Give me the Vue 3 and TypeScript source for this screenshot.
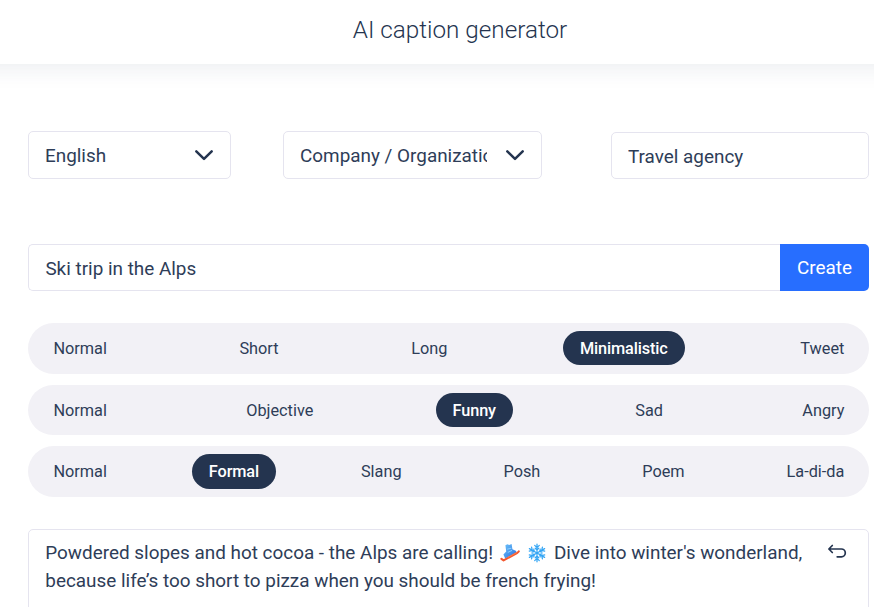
<script setup lang="ts">
import { ref } from 'vue'

interface OptionRow {
  name: string
  options: string[]
  selected: string
}

const topic = ref('Ski trip in the Alps')
const industry = ref('Travel agency')

const rows = ref<OptionRow[]>([
  { name: 'length', options: ['Normal', 'Short', 'Long', 'Minimalistic', 'Tweet'], selected: 'Minimalistic' },
  { name: 'mood', options: ['Normal', 'Objective', 'Funny', 'Sad', 'Angry'], selected: 'Funny' },
  { name: 'style', options: ['Normal', 'Formal', 'Slang', 'Posh', 'Poem', 'La-di-da'], selected: 'Formal' },
])
</script>

<template>
  <div class="page">
    <header class="header">
      <h1 class="title">AI caption generator</h1>
    </header>
    <main class="content">
      <div class="fields">
        <div class="select language">
          <span class="value">English</span>
          <svg class="chevron" width="20" height="13" viewBox="0 0 20 13"><path d="M2.3 2.3 10 9.9 17.7 2.3" /></svg>
        </div>
        <div class="select account">
          <span class="value">Company / Organization</span>
          <svg class="chevron" width="20" height="13" viewBox="0 0 20 13"><path d="M2.3 2.3 10 9.9 17.7 2.3" /></svg>
        </div>
        <input v-model="industry" class="input industry" type="text" />
      </div>

      <div class="prompt">
        <input v-model="topic" class="input topic" type="text" />
        <button class="create" type="button">Create</button>
      </div>

      <div class="rows">
        <div v-for="row in rows" :key="row.name" class="row">
          <button
            v-for="option in row.options"
            :key="option"
            type="button"
            class="pill"
            :class="{ active: row.selected === option }"
            @click="row.selected = option"
          >{{ option }}</button>
        </div>
      </div>

      <section class="result">
        <p class="caption">
          Powdered slopes and hot cocoa - the Alps are calling!
          <svg class="emoji ski" width="22" height="20" viewBox="0 0 22 20">
            <defs>
              <linearGradient id="boot" x1="0" y1="0" x2="1" y2="1">
                <stop offset="0" stop-color="#6cc4fb" />
                <stop offset="1" stop-color="#2b6fe0" />
              </linearGradient>
            </defs>
            <path d="M6.4 2.2 8.4 1.2 10.2 2 12.6 1 13.4 6.2 16.8 7.8Q17.8 8.8 17.2 10L6.2 15.4 4.4 11.4 7.2 8.6Z" fill="url(#boot)" />
            <path d="M8.2 6.2 12.4 5.2M8.8 9.4 13 7.4" fill="none" stroke="#8bd2ff" stroke-width="1" />
            <path d="M2.4 15.8 4.6 17.4 18 10Q19.4 9.2 19.8 8.4" fill="none" stroke="#f4582f" stroke-width="2.1" stroke-linecap="round" stroke-linejoin="round" />
            <path d="M9 14.4 18 9.4" stroke="#ff8952" stroke-width=".7" />
          </svg>
          <svg class="emoji snow" width="22" height="20" viewBox="0 0 22 20">
            <g fill="none" stroke="#35a6f5" stroke-width="1.25" stroke-linecap="round">
              <g v-for="angle in [0, 60, 120, 180, 240, 300]" :key="angle" :transform="`rotate(${angle} 11 10)`">
                <path d="M11 10V1.2M8.7 2.4 11 4.6 13.3 2.4M9.2 5.2 11 6.9 12.8 5.2" />
              </g>
            </g>
          </svg>
          Dive into winter's wonderland, because life’s too short to pizza when you should be french frying!
        </p>
        <button class="undo" type="button" aria-label="Undo">
          <svg width="20" height="16" viewBox="0 0 20 16"><path d="M5.3 1.5 1.9 5 5.3 8.5M2 5H14.4A3.9 3.9 0 0 1 14.4 12.8H10.2" /></svg>
        </button>
      </section>
    </main>
  </div>
</template>

<style>
body {
  background: #fff;
  overflow: hidden;
}
</style>

<style scoped>
.page {
  height: 607px;
  overflow: hidden;
  font-family: Roboto, sans-serif;
  font-size: 18.9px;
  color: #2e3d58;
}
.page * {
  box-sizing: border-box;
}
.header {
  height: 64px;
  margin: 0 -30px;
  padding-left: 46px;
  text-align: center;
  box-shadow: 0 4px 24px rgba(36, 52, 89, 0.09);
}
.title {
  margin: 0;
  font-size: 24.25px;
  font-weight: 300;
  line-height: 60px;
  color: #24344f;
}
.content {
  padding: 67px 5px 0 28px;
}
.fields {
  display: flex;
  height: 48px;
}
.select {
  display: flex;
  align-items: center;
  justify-content: space-between;
  border: 1px solid #e5e4ef;
  border-radius: 5px;
  padding: 0 16px;
}
.language {
  width: 203px;
}
.account {
  width: 259px;
  margin-left: 52px;
}
.value {
  overflow: hidden;
  white-space: nowrap;
}
.account .value {
  width: 187px;
}
.chevron {
  flex: none;
  fill: none;
  stroke: #24344f;
  stroke-width: 2.5;
  stroke-linecap: round;
  stroke-linejoin: round;
}
.input {
  min-width: 0;
  border: 1px solid #e5e4ef;
  border-radius: 5px;
  padding: 1px 16px 0;
  outline: none;
  background: #fff;
  font: inherit;
  color: inherit;
}
.industry {
  width: 258px;
  height: 47px;
  margin: 1px 0 0 69px;
}
.prompt {
  display: flex;
  height: 47px;
  margin-top: 65px;
}
.topic {
  flex: 1;
  border-right: 0;
  border-radius: 5px 0 0 5px;
  padding-left: 16.4px;
}
.create {
  width: 89px;
  border: 0;
  border-radius: 0 5px 5px 0;
  padding: 0;
  background: #276eff;
  color: #fff;
  font: inherit;
}
.rows {
  display: flex;
  flex-direction: column;
  gap: 11px;
  margin-top: 32px;
}
.row {
  display: flex;
  align-items: center;
  justify-content: space-between;
  height: 50.6px;
  border-radius: 26px;
  padding: 0 7.6px 0 8.4px;
  background: #f2f1f6;
}
.pill {
  height: 34.4px;
  border: 0;
  border-radius: 18px;
  padding: 1px 17px 0;
  background: transparent;
  color: inherit;
  font: 16.3px/33px Roboto, sans-serif;
}
.active {
  background: #24344f;
  color: #fff;
  font-weight: 500;
  letter-spacing: -0.12px;
}
.result {
  display: flex;
  align-items: flex-start;
  justify-content: space-between;
  height: 160px;
  margin-top: 32px;
  border: 1px solid #e5e4ef;
  border-radius: 5px;
  padding: 9px 21px 0 16.3px;
}
.caption {
  width: 770px;
  margin: 0;
  line-height: 28px;
}
.emoji {
  vertical-align: -4px;
}
.ski {
  margin-left: 1.5px;
}
.snow {
  margin: 0 1px 0 5px;
}
.undo {
  flex: none;
  height: 16px;
  margin-top: 5px;
  border: 0;
  padding: 0;
  background: transparent;
  line-height: 0;
}
.undo path {
  fill: none;
  stroke: #24344f;
  stroke-width: 1.7;
  stroke-linecap: round;
  stroke-linejoin: round;
}
</style>
